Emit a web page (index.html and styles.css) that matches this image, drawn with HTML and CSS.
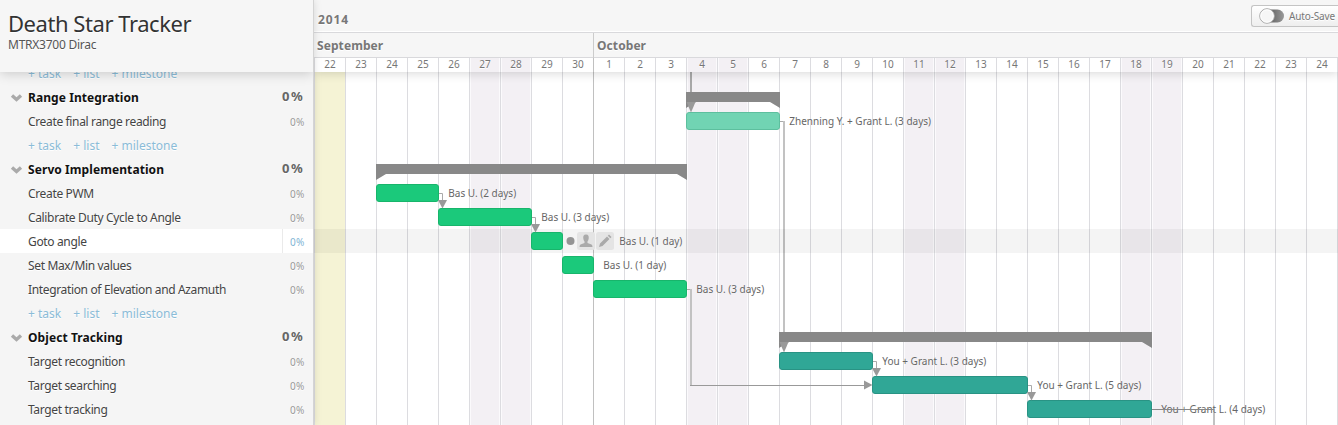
FILE: index.html
```html
<!DOCTYPE html>
<html lang="en">
<head>
<meta charset="utf-8">
<title>Death Star Tracker</title>
<link rel="stylesheet" href="styles.css">
</head>
<body>
<div class="app">
  <aside class="sidebar">
    <header class="project"><h1>Death Star Tracker</h1><p>MTRX3700 Dirac</p></header>
    <div class="list" id="list"></div>
  </aside>
  <main class="timeline">
    <header class="scale">
      <div class="year"><span>2014</span>
        <div class="autosave">
          <svg width="26" height="16" viewBox="0 0 26 16"><defs><linearGradient id="tr" x1="0" y1="0" x2="1" y2="0"><stop offset="0.400" stop-color="#666"/><stop offset="1" stop-color="#999"/></linearGradient></defs><rect x="3" y="1.500" width="22" height="13" rx="6.500" fill="url(#tr)"/><circle cx="8" cy="8" r="7.300" fill="#f6f6f6" stroke="#aaa" stroke-width="1"/><circle cx="8" cy="8" r="6.200" fill="none" stroke="#fff"/></svg>
          <span>Auto-Save</span>
        </div>
      </div>
      <div class="months"><span class="sep">September</span><span class="oct">October</span></div>
      <div class="days" id="days"></div>
    </header>
    <div class="canvas">
      <div class="columns" id="columns"></div>
      <svg class="links" width="1024" height="353" viewBox="314 72 1024 353">
        <g class="wire">
          <path class="thick" d="M691 72V104"/>
          <path d="M780 121.500H784"/><path class="pale" d="M784 121V344"/>
          <path d="M439 193.500H442.500V201"/><path d="M532 217.500H535.500V225"/>
          <path d="M687 289.500H691"/><path class="pale" d="M691 289V385"/><path class="dark" d="M690 385.500H865"/>
          <path d="M873 361.500H876.500V369"/><path d="M1028 385.500H1031.500V393"/>
          <path class="pale" d="M1214 409V425"/>
        </g>
      </svg>
      <div class="rows" id="rows"></div>
      <svg class="links" width="1024" height="353" viewBox="314 72 1024 353">
        <g class="tips">
          <path d="M686.500 102H695.500L691 112.500Z"/><path d="M779.500 342H788.500L784 352.500Z"/>
          <path d="M438 200H447L442.500 208.500Z"/><path d="M531 224H540L535.500 232.500Z"/>
          <path d="M864 380.500V389.500L872.500 385Z"/>
          <path d="M872 368H881L876.500 376.500Z"/><path d="M1027 392H1036L1031.500 400.500Z"/>
        </g>
        <path class="strike" d="M1152 409.500H1214"/>
      </svg>
    </div>
  </main>
</div>
<script src="app.js"></script>
</body>
</html>
```
FILE: styles.css
```css
* { box-sizing: border-box; }
body { margin: 0; overflow: hidden; font-family: "Noto Sans", "Open Sans", sans-serif; font-size: 12px; color: #444; background: #fff; }
.app { display: grid; grid-template-columns: 314px 1024px; width: 1338px; height: 425px; overflow: hidden; }
.sidebar { background: #f5f5f5; border-right: 1px solid #d4d4d4; display: flex; flex-direction: column; height: 425px; overflow: hidden; box-shadow: 0 0 8px rgba(0,0,0,.13); z-index: 2; position: relative; text-shadow: 0 1px 0 #fff; }
.project { flex: none; height: 72px; padding: 9px 8px 0; background: #f6f6f6; box-shadow: 0 1px 12px rgba(0,0,0,.2); position: relative; z-index: 1; }
.project h1 { margin: 0; font-size: 22px; line-height: 28px; font-weight: 400; color: #333; letter-spacing: -.45px; white-space: nowrap; }
.project p { margin: 0; font-size: 12px; line-height: 16px; color: #555; letter-spacing: -.25px; }
.list { margin-top: -10px; }
.item { height: 24px; line-height: 24px; display: flex; padding-left: 28px; white-space: nowrap; }
.item .name { flex: 1; letter-spacing: -.35px; }
.item .pct { width: 31px; padding-left: 8px; font-size: 10px; letter-spacing: .25px; color: #999; }
.item.hover { background: #fff; height: 24px; margin: -1px 0 1px; line-height: 26px; }
.item.hover .pct { color: #7fb5d5; border-left: 1px solid #eaeaea; padding-left: 7px; }
.item.group { padding-left: 9px; font-weight: 700; color: #111; }
.item.group .name { letter-spacing: .08px; }
.group svg { width: 14px; height: 10px; margin: 7px 5px 0 0; }
.item.group .pct { font-size: 13px; padding-left: 0; color: #666; line-height: 20px; letter-spacing: 1.600px; }
.add { color: #8bbcd8; gap: 12px; }
.timeline { overflow: hidden; }
.scale { position: relative; z-index: 1; height: 72px; background: #f6f6f6; box-shadow: 0 1px 10px rgba(0,0,0,.17); color: #777; text-shadow: 0 1px 0 #fff; }
.year { height: 33px; border-bottom: 1px solid #d9d9dc; box-shadow: inset 0 -1px #fff; display: flex; justify-content: space-between; font-weight: 700; font-size: 12px; padding-left: 4px; line-height: 39px; letter-spacing: .9px; }
.autosave { width: 87px; height: 22px; margin-top: 5px; border: 1px solid #c4c4c4; border-right: 0; border-radius: 3px 0 0 3px; background: linear-gradient(#fff, #eee); display: flex; align-items: center; gap: 4px; padding-left: 7px; font-size: 10px; font-weight: 400; line-height: 20px; letter-spacing: -.15px; color: #777; white-space: nowrap; }
.months { display: grid; grid-template-columns: 279px 1fr; height: 25px; border-bottom: 1px solid #d9d9dc; font-weight: 700; font-size: 12px; line-height: 26px; letter-spacing: .08px; }
.months span { padding-left: 3px; }
.months .oct { border-left: 1px solid #ccc; }
.days, .columns { display: grid; grid-template-columns: repeat(33, 31px) 1px; }
.days { height: 14px; background: #fff; text-align: center; font-size: 10px; line-height: 13px; }
.days span, .columns i { border-left: 1px solid #dcdce0; }
.days .weekend, .columns .weekend { background: #f3f0f4; box-shadow: inset 1px 0 #fbfafc, inset -1px 0 #fbfafc; }
.columns .today { background: #f5f3d5; }
.columns .month-start, .days .month-start { border-left-color: #c0c0c0; }
.canvas { display: grid; height: 353px; overflow: hidden; }
.columns, .links, .rows { grid-area: 1 / 1; height: 353px; }
.links { z-index: 0; }
.wire path { fill: none; stroke: #aaa; }
.wire .thick { stroke-width: 2; stroke: #a8a8a8; }
.wire .pale { stroke-width: 2; stroke: #c2c2c2; }
.wire .dark { stroke: #999; }
.tips path { fill: #999; }
.strike { stroke: #888; }
.rows { margin-top: -11px; z-index: 0; height: 364px; }
.row { height: 24px; display: flex; align-items: flex-start; padding-left: calc(var(--start, 0) * 31px); }
.row.hover { background: rgba(0,0,0,.043); }
.bar { width: calc(var(--days) * 31px + 1px); height: 18px; margin-top: 3px; border: 1px solid #18b56b; border-radius: 3px; background: #1bc97b; flex: none; }
.bar.mint { background: #71d4b3; border-color: #5dbf9e; }
.bar.teal { background: #30a796; border-color: #299384; }
.span { width: calc(var(--days) * 31px + 1px); height: 16px; margin-top: 7px; background: #888; clip-path: polygon(0 0, 100% 0, 100% 100%, calc(100% - 10px) 10px, 10px 10px, 0 100%); }
.label { margin-left: 9.300px; font-size: 10px; line-height: 24px; color: #666; white-space: nowrap; text-shadow: 0 0 1px #fff; }
.tools { display: flex; align-items: center; gap: 1px; padding: 3px 0 0 3px; }
.tools svg { display: block; }
.tools .dot { margin-right: 1px; }
.tools + .label { margin-left: 5.300px; }
```
FILE: app.js
```js
const items = [
  { type: 'add' },
  { type: 'group', name: 'Range Integration', start: 12, days: 3 },
  { name: 'Create final range reading', start: 12, days: 3, color: 'mint', who: 'Zhenning Y. + Grant L. (3 days)' },
  { type: 'add' },
  { type: 'group', name: 'Servo Implementation', start: 2, days: 10 },
  { name: 'Create PWM', start: 2, days: 2, who: 'Bas U. (2 days)' },
  { name: 'Calibrate Duty Cycle to Angle', start: 4, days: 3, who: 'Bas U. (3 days)' },
  { name: 'Goto angle', start: 7, days: 1, who: 'Bas U. (1 day)', hover: true },
  { name: 'Set Max/Min values', start: 8, days: 1, who: 'Bas U. (1 day)' },
  { name: 'Integration of Elevation and Azamuth', start: 9, days: 3, who: 'Bas U. (3 days)' },
  { type: 'add' },
  { type: 'group', name: 'Object Tracking', start: 15, days: 12 },
  { name: 'Target recognition', start: 15, days: 3, color: 'teal', who: 'You + Grant L. (3 days)' },
  { name: 'Target searching', start: 18, days: 5, color: 'teal', who: 'You + Grant L. (5 days)' },
  { name: 'Target tracking', start: 23, days: 4, color: 'teal', who: 'You + Grant L. (4 days)' },
];
const chevron = '<svg viewBox="0 0 14 10"><path d="M3 2.500L7.500 6.500L12 2.500" fill="none" stroke="#aaa" stroke-width="3.400"/></svg>';
const tools = `<span class="tools">
<svg class="dot" width="9" height="18"><circle cx="4.500" cy="9" r="4" fill="#949494"/></svg>
<svg width="18" height="18"><rect width="18" height="18" rx="2.500" fill="#e4e4e4"/><path d="M9 2.500C6.500 2.500 6 4.500 6.300 6.500C6.500 8.200 7.200 9 7.500 9.600V11L3.500 12.500Q2.500 13 2.500 15H15.500Q15.500 13 14.500 12.500L10.500 11V9.600C10.800 9 11.500 8.200 11.700 6.500C12 4.500 11.500 2.500 9 2.500Z" fill="#aaa"/></svg>
<svg width="18" height="18"><rect width="18" height="18" rx="2.500" fill="#e4e4e4"/><path d="M3 15L4 11.500L11 4.500L13.500 7L6.500 14ZM11.800 3.700L13 2.500L15.500 5L14.300 6.200Z" fill="#aaa"/></svg></span>`;

document.getElementById('list').innerHTML = items.map(t => {
  if (t.type === 'add') return '<div class="item add"><span>+ task</span><span>+ list</span><span>+ milestone</span></div>';
  if (t.type === 'group') return `<div class="item group">${chevron}<span class="name">${t.name}</span><span class="pct">0%</span></div>`;
  return `<div class="item ${t.hover ? 'hover' : ''}"><span class="name">${t.name}</span><span class="pct">0%</span></div>`;
}).join('');

document.getElementById('rows').innerHTML = items.map(t => {
  if (t.type === 'add') return '<div class="row"></div>';
  const pos = `style="--start:${t.start};--days:${t.days}"`;
  if (t.type === 'group') return `<div class="row" ${pos}><span class="span"></span></div>`;
  return `<div class="row ${t.hover ? 'hover' : ''}" ${pos}><span class="bar ${t.color || ''}"></span>${t.hover ? tools : ''}<span class="label">${t.who}</span></div>`;
}).join('');

const weekend = [5, 6, 12, 13, 19, 20, 26, 27];
let days = '', cols = '';
for (let i = 0; i < 34; i++) {
  const cls = weekend.includes(i) ? 'weekend' : i === 9 ? 'month-start' : '';
  const day = i < 9 ? 22 + i : i - 8;
  days += `<span class="${cls}">${i < 33 ? day : ''}</span>`;
  cols += `<i class="${i === 0 ? 'today' : cls}"></i>`;
}
document.getElementById('days').innerHTML = days;
document.getElementById('columns').innerHTML = cols;
```
